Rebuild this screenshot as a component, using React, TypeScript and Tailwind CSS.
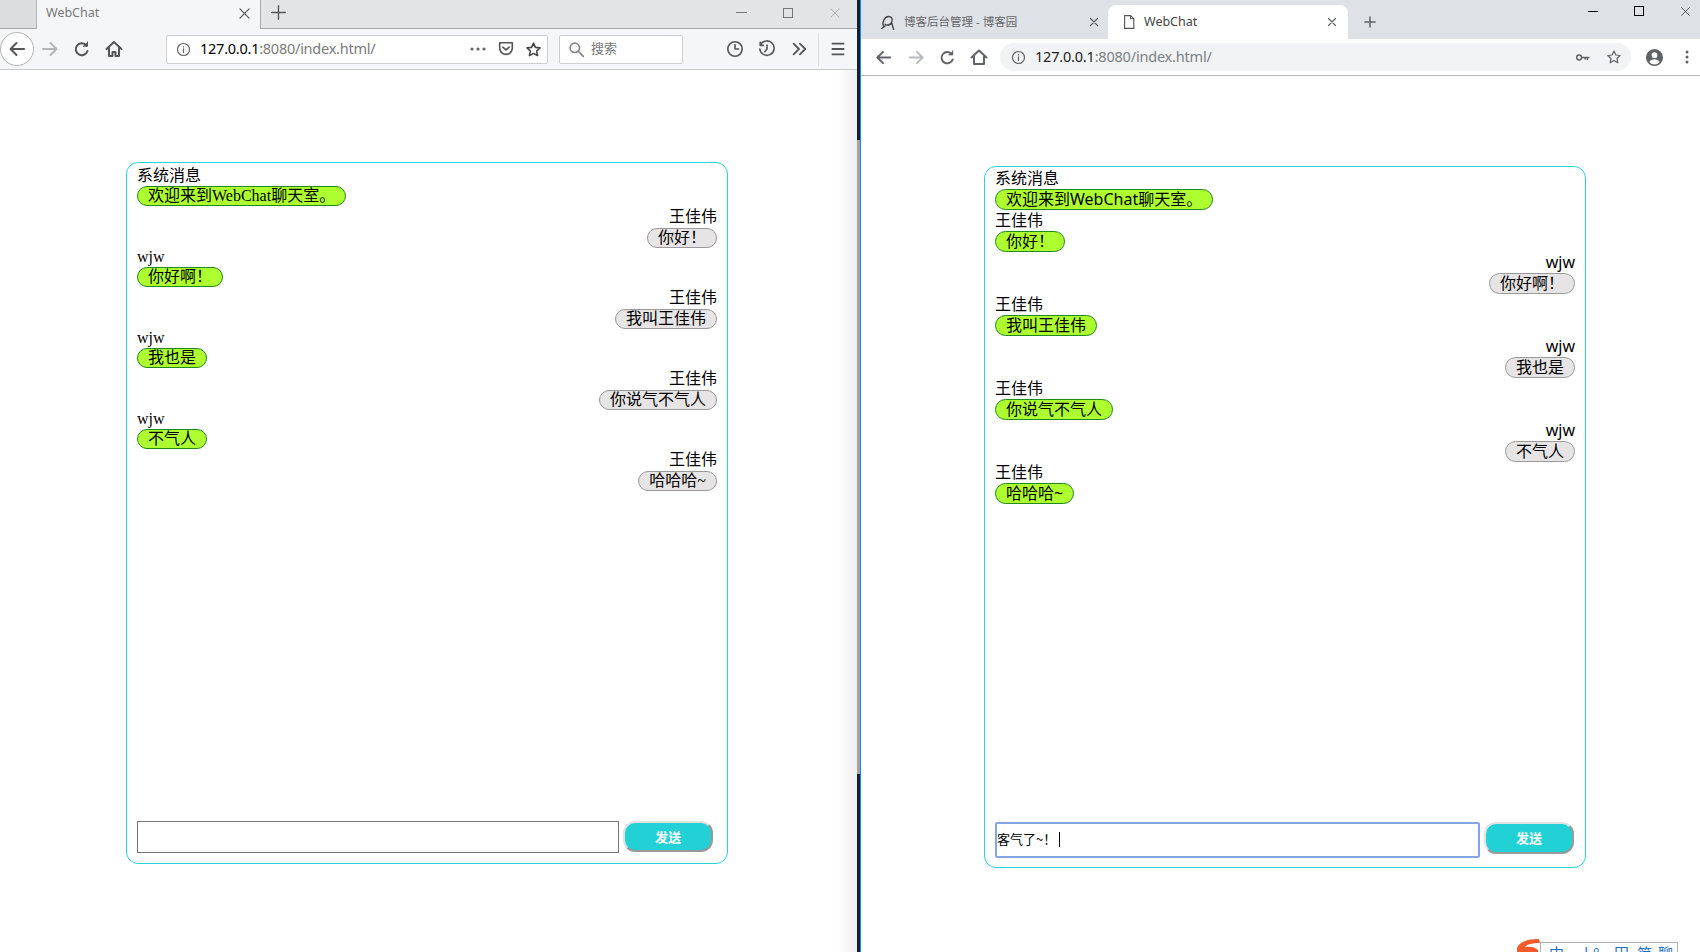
import React from "react";

type Msg = { name: string; text: string; mine: boolean };

const SANS = "font-['Noto_Sans','Noto_Sans_CJK_SC',sans-serif]";

const Svg = ({ size = 20, stroke = "#555", sw = 2, fill = "none", children, className = "" }: { size?: number; stroke?: string; sw?: number; fill?: string; children: React.ReactNode; className?: string }) => (
  <svg width={size} height={size} viewBox="0 0 20 20" fill={fill} stroke={stroke} strokeWidth={sw} strokeLinecap="round" strokeLinejoin="round" className={`shrink-0 ${className}`}>
    {children}
  </svg>
);

const ArrowL = ({ c = "#555", size = 20 }: { c?: string; size?: number }) => <Svg stroke={c} size={size}><path d="M17 10H3.5M9.5 4l-6 6 6 6" /></Svg>;
const ArrowR = ({ c = "#b5b5b5", size = 20 }: { c?: string; size?: number }) => <Svg stroke={c} size={size}><path d="M3 10h13.5M10.5 4l6 6-6 6" /></Svg>;
const Reload = ({ c = "#555", size = 20 }: { c?: string; size?: number }) => <Svg stroke={c} size={size}><path d="M15.5 12a6 6 0 1 1-1-5.5" /><path d="M15.5 3v4.2h-4.2" fill={c} strokeWidth={1} /></Svg>;
const Info = ({ c = "#555", size = 15 }: { c?: string; size?: number }) => <Svg stroke={c} size={size} sw={1.6}><circle cx="10" cy="10" r="8" /><path d="M10 9v5" /><path d="M10 6v.5" /></Svg>;
const Star = ({ c = "#444", size = 18, sw = 1.8 }: { c?: string; size?: number; sw?: number }) => <Svg stroke={c} size={size} sw={sw}><path d="M10 2.5l2.3 5 5.4.6-4 3.7 1.1 5.4L10 14.5l-4.8 2.7 1.1-5.4-4-3.7 5.4-.6z" /></Svg>;
const X = ({ c = "#555", size = 12, sw = 2 }: { c?: string; size?: number; sw?: number }) => <Svg stroke={c} size={size} sw={sw}><path d="M3 3l14 14M17 3L3 17" /></Svg>;

function Chat({ msgs, sans, rowClass, pillClass, inputText }: { msgs: Msg[]; sans: boolean; rowClass: string; pillClass: string; inputText?: string }) {
  const font = sans ? "font-['Noto_Sans','Noto_Sans_CJK_SC',sans-serif]" : "font-['Liberation_Serif','Noto_Sans_CJK_SC',serif]";
  return (
    <div className={`w-[602px] h-[702px] border border-[#27d2d8] rounded-[12px] flex flex-col justify-between pl-[10px] pr-[10px] ${font} text-[16px] text-black`}>
      <div className={`flex flex-col ${sans ? "pt-px" : "pt-[2px]"}`}>
        {msgs.map((m, i) => (
          <div key={i} className={`flex flex-col ${rowClass} ${m.mine ? "items-end" : "items-start"}`}>
            <div className="h-[21px] leading-[21px] whitespace-nowrap">{m.name}</div>
            <div className={`${pillClass} leading-[18px] px-[10px] rounded-full border whitespace-nowrap ${m.mine ? `bg-[#e6e4e4] border-[#999] ${sans ? "" : "mt-px"}` : "bg-[#adff2f] border-[#1f8a1f]"}`}>{m.text}</div>
          </div>
        ))}
      </div>
      <div className={`flex items-start gap-[4px] ${inputText ? "pb-[9px]" : "pb-[10px]"}`}>
        {inputText ? (
          <div className="w-[485px] h-[36px] border-2 border-[#84a5e6] rounded-[2px] flex items-center pb-[2px] text-[13px] font-['Noto_Sans_CJK_SC',sans-serif]">
            <span>{inputText}</span>
            <span className="w-px h-[15px] bg-black ml-[3px]" />
          </div>
        ) : (
          <input readOnly className="w-[482px] h-[32px] border border-[#777] bg-white" />
        )}
        <button className={`${inputText ? "h-[32px]" : "h-[31px]"} w-[90px] bg-[#22d1d6] text-white text-[13px] font-bold rounded-[12px] border-2 border-t-[#e2e2e2] border-l-[#e2e2e2] border-r-[#999] border-b-[#999] font-['Noto_Sans_CJK_SC',sans-serif]`}>发送</button>
      </div>
    </div>
  );
}

const leftMsgs: Msg[] = [
  { name: "系统消息", text: "欢迎来到WebChat聊天室。", mine: false },
  { name: "王佳伟", text: "你好！", mine: true },
  { name: "wjw", text: "你好啊！", mine: false },
  { name: "王佳伟", text: "我叫王佳伟", mine: true },
  { name: "wjw", text: "我也是", mine: false },
  { name: "王佳伟", text: "你说气不气人", mine: true },
  { name: "wjw", text: "不气人", mine: false },
  { name: "王佳伟", text: "哈哈哈~", mine: true },
];
const rightMsgs: Msg[] = leftMsgs.map((m, i) => (i === 0 ? m : { ...m, mine: !m.mine }));

function Firefox() {
  return (
    <div className={`w-[857px] h-full flex flex-col bg-white bg-[linear-gradient(to_right,#fff_0,#fff_838px,#efefef_857px)] ${SANS}`}>
      <div className="h-[29px] bg-[#e3e4e6] border-b border-[#a9a9ab] flex items-stretch relative">
        <div className="w-[37px] bg-[#dcdddf] border-r border-[#b5b5b7]" />
        <div className="w-[224px] h-[29px] bg-[#f5f6f7] border-r border-[#a9a9ab] flex items-center pb-[3px] pl-[9px] pr-[9px] text-[12.5px] text-[#77787a]">
          <span className="flex-1">WebChat</span>
          <X c="#555" size={13} sw={1.8} />
        </div>
        <div className="ml-[9px] flex items-center pb-[4px]"><Svg size={17} stroke="#555" sw={1.6}><path d="M10 2v16M2 10h16" /></Svg></div>
        <div className="ml-auto flex items-center gap-[36px] pr-[16px] pb-[3px]">
          <span className="w-[11px] h-px bg-[#777]" />
          <span className="w-[10px] h-[10px] border border-[#777]" />
          <X c="#888" size={12} sw={0.9} />
        </div>
      </div>
      <div className="h-[41px] bg-[#f5f6f7] border-b border-[#c9c9cb] flex items-center pr-[10px]">
        <div className="w-[34px] h-[34px] rounded-full border border-[#b5b5b5] bg-white flex items-center justify-center shrink-0"><ArrowL /></div>
        <div className="ml-[6px]"><ArrowR /></div>
        <div className="ml-[12px]"><Reload /></div>
        <div className="ml-[12px]">
          <Svg stroke="#555"><path d="M2.5 10L10 3l7.5 7" /><path d="M5 9v8h3.5v-4h3v4H15V9" /></Svg>
        </div>
        <div className="ml-[42px] w-[382px] h-[29px] bg-white border border-[#cfcfd1] rounded-[2px] flex items-center pl-[9px] pr-[5px] shrink-0">
          <Info c="#666" size={15} />
          <span className="ml-[9px] text-[14.5px] text-[#7b7b7b] flex-1 tracking-[-0.25px]"><span className="text-black">127.0.0.1</span>:8080/index.html/</span>
          <svg width="16" height="4" viewBox="0 0 16 4" fill="#666" className="mr-[11px]"><circle cx="2" cy="2" r="1.6" /><circle cx="8" cy="2" r="1.6" /><circle cx="14" cy="2" r="1.6" /></svg>
          <Svg size={18} stroke="#555" sw={1.8}><path d="M3 3h14v6a7 7 0 0 1-14 0z" /><path d="M6.5 8l3.5 3 3.5-3" /></Svg>
          <div className="ml-[10px]"><Star size={17} /></div>
        </div>
        <div className="ml-[11px] w-[124px] h-[29px] bg-white border border-[#cfcfd1] rounded-[2px] flex items-center pl-[8px] shrink-0">
          <Svg size={17} stroke="#888" sw={2}><circle cx="8" cy="8" r="5.5" /><path d="M12.5 12.5l5.5 5.5" /></Svg>
          <span className="ml-[6px] text-[13px] text-[#777]">搜索</span>
        </div>
        <div className="ml-[43px]"><Svg size={18} stroke="#555" sw={1.8}><circle cx="10" cy="10" r="8" /><path d="M10 5v5h4" /></Svg></div>
        <div className="ml-[14px]"><Svg size={18} stroke="#555" sw={1.8}><path d="M3 5a8 8 0 1 1-1 5" /><path d="M2.5 2.5V6H6" /><path d="M10 5.5V10l-2.5 3" /></Svg></div>
        <div className="ml-[14px]"><Svg size={18} stroke="#555" sw={2}><path d="M4 4l6 6-6 6M11 4l6 6-6 6" /></Svg></div>
        <div className="ml-[10px] w-px h-[33px] bg-[#dedee0]" />
        <div className="ml-[10px]"><Svg size={18} stroke="#555" sw={2}><path d="M3 4h14M3 10h14M3 16h14" strokeLinecap="butt" /></Svg></div>
      </div>
      <div className="pl-[126px] pt-[92px]">
        <Chat msgs={leftMsgs} sans={false} rowClass="h-[40.5px]" pillClass="h-[20px]" />
      </div>
    </div>
  );
}

function Chrome() {
  return (
    <div className={`flex-1 h-full flex flex-col bg-white border-l border-[#2186dc] relative overflow-hidden ${SANS}`}>
      <div className="h-[39px] bg-[#dee1e6] flex items-end">
        <div className="w-[247px] h-[34px] flex items-center pl-[19px] pr-[9px] text-[#666]">
          <Svg size={17} stroke="#444" sw={1.6}><path d="M4 14C2 9 6 3 10 3c4 0 5 3 4 6-1 3-5 5-8 3 3 2 6 1 8-1l2 7M2 17l4-3" /></Svg>
          <span className="ml-[7px] flex-1 text-[11.5px]">博客后台管理 - 博客园</span>
          <X c="#5f6368" size={10} sw={2.4} />
        </div>
        <div className="w-[240px] h-[34px] bg-white rounded-t-[8px] flex items-center pl-[13px] pr-[11px] text-[12.5px] text-[#444]">
          <Svg size={16} stroke="#555" sw={1.4}><path d="M4.500 2h7.500l4 4v12h-11.500z" /><path d="M12 2v4h4" /></Svg>
          <span className="ml-[7px] flex-1">WebChat</span>
          <X c="#5f6368" size={10} sw={2.4} />
        </div>
        <div className="h-[34px] flex items-center ml-[14px]"><Svg size={16} stroke="#5f6368" sw={1.9}><path d="M10 3v14M3 10h14" strokeLinecap="butt" /></Svg></div>
        <div className="ml-auto self-start h-[22px] flex items-center gap-[36px] pr-[9px]">
          <span className="w-[10px] h-px bg-black" />
          <span className="w-[10px] h-[10px] border border-black" />
          <X c="#111" size={11} sw={1.2} />
        </div>
      </div>
      <div className="h-[37px] border-b border-[#b5b5b5] flex items-center pl-[13px] pr-[4px]">
        <ArrowL c="#5f6368" size={19} />
        <div className="ml-[14px]"><ArrowR c="#b8babd" size={19} /></div>
        <div className="ml-[12px]"><Reload c="#5f6368" size={19} /></div>
        <div className="ml-[12px]"><Svg size={20} stroke="#5f6368" sw={2}><path d="M2.500 10.500L10 3.500l7.500 7M5 9v8h10V9" /></Svg></div>
        <div className="ml-[11px] w-[631px] h-[28px] bg-[#f1f3f4] rounded-full flex items-center pl-[11px] pr-[9px] shrink-0">
          <Info c="#5f6368" size={15} />
          <span className="ml-[9px] text-[14.5px] text-[#7b7f85] flex-1 tracking-[-0.2px]"><span className="text-[#222]">127.0.0.1</span>:8080/index.html/</span>
          <Svg size={15} stroke="#5f6368" sw={2}><circle cx="5.500" cy="10" r="3.200" /><path d="M9 10h9.500M16.500 10v2.500M13.500 10v2" /></Svg>
          <div className="ml-[16px]"><Star c="#5f6368" size={16} sw={1.5} /></div>
        </div>
        <div className="ml-[14px]">
          <svg width="19" height="19" viewBox="0 0 20 20" fill="#5f6368" className="shrink-0"><path fillRule="evenodd" d="M10 1a9 9 0 1 0 0 18 9 9 0 0 0 0-18zm0 3.500a3 3 0 1 1 0 6 3 3 0 0 1 0-6zM4.500 14.800c1-2 3.200-3 5.500-3s4.500 1 5.500 3a7 7 0 0 1-11 0z" /></svg>
        </div>
        <div className="ml-[21px]">
          <svg width="4" height="14" viewBox="0 0 4 14" fill="#5f6368"><circle cx="2" cy="2" r="1.500" /><circle cx="2" cy="7" r="1.500" /><circle cx="2" cy="12" r="1.500" /></svg>
        </div>
      </div>
      <div className="pl-[123px] pt-[90px]">
        <Chat msgs={rightMsgs} sans={true} rowClass="h-[42px]" pillClass="h-[21px]" inputText="客气了~！" />
      </div>
      {/* IME status bar over the page, clipped by the window edge */}
      <div className="absolute left-[679px] top-[942px] w-[138px] h-[24px] border border-[#b0b0b8] bg-white flex items-start pl-[8px] text-[15px] leading-[20px] text-[#1f6fc4] overflow-hidden">
        <span className="w-[15px]">中</span>
        <span className="w-[15px] ml-[14px]">丿</span>
        <span className="w-[6px]">°</span>
        <span className="w-[15px] ml-[15px]">田</span>
        <span className="w-[15px] ml-[8px]">简</span>
        <span className="w-[15px] ml-[6px]">聊</span>
      </div>
      <svg width="28" height="20" viewBox="0 0 28 20" className="absolute left-[654px] top-[938px]"><path d="M2 10C4 4 12 1 24 1l1 4c-7 0-13 1-15 4 5-1 10 0 13 3v8H2z" fill="#f4592a" /></svg>
    </div>
  );
}

export default function App() {
  return (
    <div className="w-[1700px] h-[952px] flex overflow-hidden bg-white">
      <Firefox />
      <div className="w-[3px] h-full flex flex-col shrink-0">
        <div className="h-[140px] bg-[#0b2239]" />
        <div className="h-[634px] bg-[#a3a3a3]" />
        <div className="flex-1 bg-[#0b2239]" />
      </div>
      <Chrome />
    </div>
  );
}
